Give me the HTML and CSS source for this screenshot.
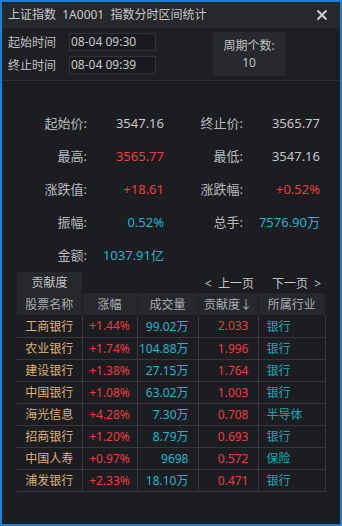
FILE: index.html
```html
<!DOCTYPE html>
<html lang="zh">
<head>
<meta charset="utf-8">
<title>指数分时区间统计</title>
<link rel="stylesheet" href="styles.css">
</head>
<body>
<div class="win">
  <div class="titlebar">
    <span class="title">上证指数&nbsp;&nbsp;1A0001&nbsp;&nbsp;指数分时区间统计</span>
    <svg class="close" width="12" height="12" viewBox="0 0 12 12"><path d="M1.5 1.5 L10.5 10.5 M10.5 1.5 L1.5 10.5" stroke="#c9c9c9" stroke-width="2.2" fill="none"/></svg>
  </div>
  <div class="timesec">
    <div class="timecol">
      <div class="trow"><span class="tlabel">起始时间</span><span class="tbox">08-04 09:30</span></div>
      <div class="trow"><span class="tlabel">终止时间</span><span class="tbox">08-04 09:39</span></div>
    </div>
    <div class="period"><div>周期个数:</div><div>10</div></div>
  </div>
  <div class="stats">
    <span class="lb">起始价:</span><span class="v gray">3547.16</span><span class="lb">终止价:</span><span class="v gray">3565.77</span>
    <span class="lb">最高:</span><span class="v red">3565.77</span><span class="lb">最低:</span><span class="v gray">3547.16</span>
    <span class="lb">涨跌值:</span><span class="v red">+18.61</span><span class="lb">涨跌幅:</span><span class="v red">+0.52%</span>
    <span class="lb">振幅:</span><span class="v cyan">0.52%</span><span class="lb">总手:</span><span class="v cyan">7576.90万</span>
    <span class="lb">金额:</span><span class="v cyan">1037.91亿</span>
  </div>
  <div class="tabrow">
    <span class="tab">贡献度</span>
    <span class="pager">
      <span>&lt;&nbsp;&nbsp;上一页</span>
      <span>下一页&nbsp;&nbsp;&gt;</span>
    </span>
  </div>
  <table class="tbl">
    <colgroup><col class="c1"><col class="c2"><col class="c3"><col class="c4"><col class="c5"></colgroup>
    <thead>
      <tr><th>股票名称</th><th>涨幅</th><th>成交量</th><th>贡献度↓</th><th>所属行业</th></tr>
    </thead>
    <tbody>
      <tr><td class="nm">工商银行</td><td class="pct">+1.44%</td><td class="vol">99.02万</td><td class="ctb">2.033</td><td class="ind">银行</td></tr>
      <tr><td class="nm">农业银行</td><td class="pct">+1.74%</td><td class="vol">104.88万</td><td class="ctb">1.996</td><td class="ind">银行</td></tr>
      <tr><td class="nm">建设银行</td><td class="pct">+1.38%</td><td class="vol">27.15万</td><td class="ctb">1.764</td><td class="ind">银行</td></tr>
      <tr><td class="nm">中国银行</td><td class="pct">+1.08%</td><td class="vol">63.02万</td><td class="ctb">1.003</td><td class="ind">银行</td></tr>
      <tr><td class="nm">海光信息</td><td class="pct">+4.28%</td><td class="vol">7.30万</td><td class="ctb">0.708</td><td class="ind">半导体</td></tr>
      <tr><td class="nm">招商银行</td><td class="pct">+1.20%</td><td class="vol">8.79万</td><td class="ctb">0.693</td><td class="ind">银行</td></tr>
      <tr><td class="nm">中国人寿</td><td class="pct">+0.97%</td><td class="vol">9698</td><td class="ctb">0.572</td><td class="ind">保险</td></tr>
      <tr><td class="nm">浦发银行</td><td class="pct">+2.33%</td><td class="vol">18.10万</td><td class="ctb">0.471</td><td class="ind">银行</td></tr>
    </tbody>
  </table>
</div>
</body>
</html>
```
FILE: styles.css
```css
* { box-sizing: border-box; }
html, body { margin: 0; padding: 0; background: #1d1e22; }
body {
  font-family: "Noto Sans", "Noto Sans CJK SC", sans-serif;
  color: #c4c4c4;
}
.win {
  width: 342px;
  height: 526px;
  border: 2px solid #1f7fd4;
  background: #1c1d21;
}
.titlebar {
  height: 26px;
  background: #26282c;
  display: flex;
  align-items: center;
  justify-content: space-between;
  padding: 0 12px 0 6px;
}
.title { font-size: 12px; color: #c6c6c6; line-height: 26px; }
.close { display: block; }
.timesec {
  height: 53px;
  border-bottom: 1px solid #2e3034;
  background: #1e1f23;
  display: flex;
  align-items: flex-start;
  padding: 4px 0 0 6px;
}
.timecol { padding-top: 1px; display: flex; flex-direction: column; gap: 5px; }
.trow { display: flex; align-items: center; height: 18px; }
.tlabel { width: 61px; font-size: 12px; color: #c0c0c0; }
.tbox {
  width: 87px;
  height: 18px;
  line-height: 16px;
  font-size: 12px;
  color: #c8c8c8;
  background: #1a1b1e;
  border: 1px solid #303236;
  padding-left: 1px;
}
.period {
  margin-left: 57px;
  width: 72px;
  height: 44px;
  background: #28292d;
  font-size: 12px;
  color: #c0c0c0;
  text-align: center;
  display: flex;
  flex-direction: column;
  justify-content: center;
  line-height: 17px;
}
.stats {
  display: grid;
  grid-template-columns: 77px 77px 79px 77px;
  grid-auto-rows: 33px;
  margin-left: 8px;
  padding-top: 25px;
  font-size: 13px;
  align-items: center;
  text-align: right;
}
.lb { color: #b6babe; }
.gray { color: #c6c6c6; }
.red { color: #ef3a3e; }
.cyan { color: #1cb7d1; }
.tabrow {
  display: flex;
  justify-content: space-between;
  align-items: center;
  margin: 1px 15px 0 15px;
  height: 21px;
}
.tab {
  width: 65px;
  height: 21px;
  line-height: 21px;
  background: #26282c;
  text-align: center;
  font-size: 12px;
  color: #c4c4c4;
}
.pager { display: flex; gap: 18px; font-size: 12px; color: #c4c4c4; padding-right: 4px; }
.tbl {
  margin-left: 15px;
  width: 308px;
  table-layout: fixed;
  border-collapse: collapse;
  font-size: 12px;
}
.c1 { width: 65px; }
.c2 { width: 55px; }
.c3 { width: 61px; }
.c4 { width: 60px; }
.c5 { width: 67px; }
.tbl th {
  height: 22px;
  padding: 0;
  background: #26282c;
  color: #a8acb0;
  font-weight: normal;
  text-align: center;
  border-left: 1px solid #1e1f23;
}
.tbl th:first-child { border-left: none; }
.tbl td {
  height: 22px;
  padding: 0;
  border-bottom: 1px solid #36383c;
  border-left: 1px solid #36383c;
  white-space: nowrap;
}
.tbl td:first-child { border-left: none; }
.tbl td:last-child { border-right: 1px solid #36383c; }
.nm { text-align: center; color: #dcb070; }
.pct { text-align: center; color: #ef3a3e; }
.vol { text-align: right; padding-right: 9px !important; color: #1cb7d1; }
.ctb { text-align: right; padding-right: 9px !important; color: #ef3a3e; }
.ind { text-align: left; padding-left: 8px !important; color: #17a9b6; }
```
